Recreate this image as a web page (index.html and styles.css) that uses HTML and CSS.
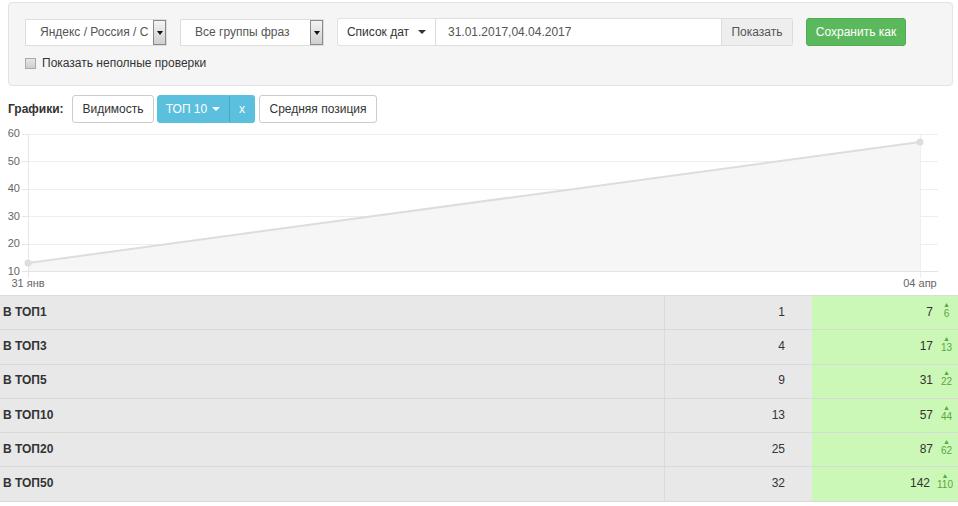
FILE: index.html
```html
<!DOCTYPE html>
<html lang="ru">
<head>
    <meta charset="UTF-8">
    <title>Позиции</title>
    <link rel="stylesheet" href="styles.css">
</head>
<body>
    <div class="filters">
        <div class="filter-row">
            <div class="select sel-engine">
                <span class="select-text">Яндекс / Россия / С</span>
                <span class="select-arrow"></span>
            </div>
            <div class="select sel-group">
                <span class="select-text">Все группы фраз</span>
                <span class="select-arrow"></span>
            </div>
            <div class="input-group">
                <div class="btn btn-dates">Список дат <span class="caret"></span></div>
                <div class="date-input">31.01.2017,04.04.2017</div>
                <div class="btn btn-show">Показать</div>
            </div>
            <div class="btn btn-save">Сохранить как</div>
        </div>
        <label class="check-row">
            <span class="checkbox"></span>
            Показать неполные проверки
        </label>
    </div>

    <div class="charts-bar">
        <b class="charts-label">Графики:</b>
        <div class="btn btn-chart btn-vis">Видимость</div>
        <div class="btn-pair">
            <div class="btn btn-info">ТОП 10 <span class="caret white"></span></div>
            <div class="btn btn-info btn-x">x</div>
        </div>
        <div class="btn btn-chart btn-avg">Средняя позиция</div>
    </div>

    <svg class="chart" width="958" height="168" viewBox="0 0 958 168">
        <g stroke="#eeeeee" stroke-width="1">
            <line x1="28" y1="8.5" x2="938" y2="8.5"/>
            <line x1="28" y1="35.5" x2="938" y2="35.5"/>
            <line x1="28" y1="63.5" x2="938" y2="63.5"/>
            <line x1="28" y1="90.5" x2="938" y2="90.5"/>
            <line x1="28" y1="118.5" x2="938" y2="118.5"/>
        </g>
        <polygon points="28,137 920,16 920,145 28,145" fill="#f6f6f6"/>
        <line x1="920.5" y1="8" x2="920.5" y2="152" stroke="#eeeeee"/>
        <line x1="28.5" y1="8" x2="28.5" y2="152" stroke="#e6e6e6"/>
        <line x1="22" y1="145.5" x2="938" y2="145.5" stroke="#e3e3e3"/>
        <g stroke="#e6e6e6">
            <line x1="22" y1="8.5" x2="28" y2="8.5"/>
            <line x1="22" y1="35.5" x2="28" y2="35.5"/>
            <line x1="22" y1="63.5" x2="28" y2="63.5"/>
            <line x1="22" y1="90.5" x2="28" y2="90.5"/>
            <line x1="22" y1="118.5" x2="28" y2="118.5"/>
        </g>
        <polyline points="28,137 920,16" fill="none" stroke="#dddddd" stroke-width="2"/>
        <circle cx="28" cy="137" r="3.5" fill="#dddddd"/>
        <circle cx="920" cy="16" r="3.5" fill="#dddddd"/>
        <g class="axis-text" text-anchor="end">
            <text x="20" y="11">60</text>
            <text x="20" y="39">50</text>
            <text x="20" y="66">40</text>
            <text x="20" y="94">30</text>
            <text x="20" y="121">20</text>
            <text x="20" y="149">10</text>
        </g>
        <g class="axis-text" text-anchor="middle">
            <text x="28" y="161">31 янв</text>
            <text x="920" y="161">04 апр</text>
        </g>
    </svg>

    <div class="stats">
        <div class="stat-row">
            <div class="cell name">В ТОП1</div>
            <div class="cell prev">1</div>
            <div class="cell cur"><span class="val">7</span><span class="delta"><i>▲</i>6</span></div>
        </div>
        <div class="stat-row">
            <div class="cell name">В ТОП3</div>
            <div class="cell prev">4</div>
            <div class="cell cur"><span class="val">17</span><span class="delta"><i>▲</i>13</span></div>
        </div>
        <div class="stat-row">
            <div class="cell name">В ТОП5</div>
            <div class="cell prev">9</div>
            <div class="cell cur"><span class="val">31</span><span class="delta"><i>▲</i>22</span></div>
        </div>
        <div class="stat-row">
            <div class="cell name">В ТОП10</div>
            <div class="cell prev">13</div>
            <div class="cell cur"><span class="val">57</span><span class="delta"><i>▲</i>44</span></div>
        </div>
        <div class="stat-row">
            <div class="cell name">В ТОП20</div>
            <div class="cell prev">25</div>
            <div class="cell cur"><span class="val">87</span><span class="delta"><i>▲</i>62</span></div>
        </div>
        <div class="stat-row">
            <div class="cell name">В ТОП50</div>
            <div class="cell prev">32</div>
            <div class="cell cur"><span class="val">142</span><span class="delta"><i>▲</i>110</span></div>
        </div>
    </div>
</body>
</html>
```

FILE: styles.css
```css
body {
    margin: 0;
    font-family: "Liberation Sans", Arial, sans-serif;
    font-size: 12px;
    color: #333;
    background: #fff;
    width: 958px;
    height: 506px;
    overflow: hidden;
}

/* фильтры */
.filters {
    margin: 2px 5px 0 8px;
    height: 84px;
    box-sizing: border-box;
    background: #f5f5f5;
    border: 1px solid #e3e3e3;
    border-radius: 4px;
    padding: 15px 16px 0 16px;
}
.filter-row {
    display: flex;
    align-items: center;
    height: 28px;
}
.select {
    display: flex;
    align-items: center;
    height: 27px;
    box-sizing: border-box;
    background: #fff;
    border: 1px solid #ddd;
    color: #555;
    margin-right: 13px;
    overflow: hidden;
}
.sel-engine { width: 142px; }
.sel-group { width: 144px; }
.select-text {
    flex: 1;
    padding-left: 14px;
    white-space: nowrap;
    overflow: hidden;
}
.select-arrow {
    position: relative;
    width: 13px;
    height: 25px;
    box-sizing: border-box;
    border: 1px solid #8a8a8a;
    background: linear-gradient(#f4f4f4, #cfcfcf);
}
.select-arrow::after {
    content: "";
    position: absolute;
    left: 3px;
    top: 10px;
    border-left: 3px solid transparent;
    border-right: 3px solid transparent;
    border-top: 4px solid #111;
}
.btn {
    display: flex;
    align-items: center;
    justify-content: center;
    box-sizing: border-box;
    height: 28px;
    border: 1px solid #ccc;
    border-radius: 3px;
    background: #fff;
    color: #333;
    white-space: nowrap;
}
.input-group {
    display: flex;
    height: 28px;
    margin-right: 13px;
}
.btn-dates {
    width: 98px;
    border-radius: 3px 0 0 3px;
    border-right: none;
    border-color: #e2e2e2;
}
.date-input {
    width: 287px;
    box-sizing: border-box;
    border: 1px solid #ddd;
    background: #fff;
    color: #555;
    padding: 0 12px;
    line-height: 26px;
}
.btn-show {
    width: 71px;
    border-radius: 0 3px 3px 0;
    border-left: none;
    background: #eee;
    border-color: #ddd;
    color: #555;
}
.btn-save {
    width: 100px;
    background: #5cb85c;
    border-color: #4cae4c;
    color: #fff;
}
.caret {
    display: inline-block;
    margin-left: 9px;
    border-left: 4px solid transparent;
    border-right: 4px solid transparent;
    border-top: 4px solid #333;
}
.caret.white {
    margin-left: 5px;
    border-top-color: #fff;
}
.check-row {
    display: flex;
    align-items: center;
    margin-top: 10px;
    color: #333;
}
.checkbox {
    width: 9px;
    height: 9px;
    border: 1px solid #aaa;
    background: linear-gradient(#e6e6e6, #cfcfcf);
    margin-right: 6px;
}

/* графики */
.charts-bar {
    display: flex;
    align-items: center;
    margin: 9px 0 0 8px;
    height: 28px;
}
.charts-label {
    width: 64px;
}
.btn-chart {
    margin-right: 3px;
}
.btn-vis { width: 82px; }
.btn-avg { width: 118px; }
.btn-pair {
    display: flex;
    margin-right: 4px;
}
.btn-info {
    background: #5bc0de;
    border-color: #5bc0de;
    color: #fff;
    width: 72px;
    border-radius: 3px 0 0 3px;
}
.btn-x {
    width: 26px;
    border-radius: 0 3px 3px 0;
    border-left: 1px solid #46a6c2;
}
.chart {
    display: block;
    margin-top: 3px;
}
.axis-text {
    font-family: "Liberation Sans", Arial, sans-serif;
    font-size: 11px;
    fill: #666;
}

/* таблица */
.stats {
    margin-top: 1px;
    border-top: 1px solid #dcdcdc;
}
.stat-row {
    display: flex;
    height: 34.3px;
    box-sizing: border-box;
    border-bottom: 1px solid #d9d9d9;
}
.cell {
    display: flex;
    align-items: center;
    box-sizing: border-box;
    padding-bottom: 2px;
}
.name {
    width: 665px;
    background: #e8e8e8;
    border-right: 1px solid #dadada;
    padding-left: 3px;
    font-weight: bold;
}
.prev {
    width: 147px;
    background: #e8e8e8;
    justify-content: flex-end;
    padding-right: 27px;
}
.cur {
    width: 146px;
    background: #ccf8b7;
    justify-content: flex-end;
    padding-right: 5px;
}
.val {
    margin-right: 7px;
}
.delta {
    display: flex;
    flex-direction: column;
    align-items: center;
    min-width: 13px;
    font-size: 10px;
    line-height: 10px;
    color: #5aa544;
    margin-top: -4px;
}
.delta i {
    font-style: normal;
    font-size: 7px;
    line-height: 8px;
}
```
